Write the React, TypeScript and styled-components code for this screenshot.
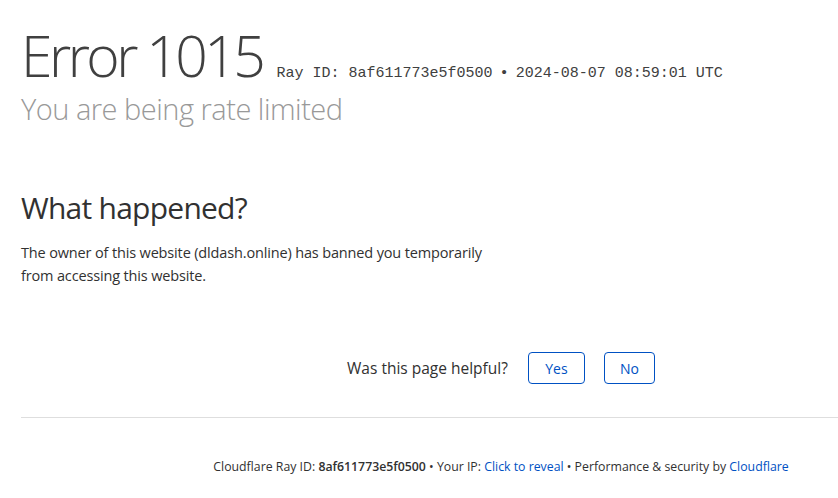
import React from "react"
import styled, { createGlobalStyle } from "styled-components"

const GlobalStyle = createGlobalStyle`
  html, body {
    margin: 0;
    padding: 0;
    background: #fff;
    overflow: hidden;
  }
  body {
    font-family: "Open Sans", "Noto Sans", sans-serif;
    color: #313131;
  }
`

const Wrapper = styled.div`
  width: 960px;
  margin-left: 21px;
  padding-top: 23px;
`

const TitleRow = styled.h1`
  display: flex;
  align-items: baseline;
  margin: 0;
  font-weight: 300;
  white-space: nowrap;
`

const Title = styled.span`
  font-size: 57px;
  line-height: 64px;
  color: #404040;
  letter-spacing: -3.5px;
`

const RayInfo = styled.small`
  font-family: "Liberation Mono", "Courier New", monospace;
  font-size: 15px;
  font-weight: 400;
  color: #404040;
  margin-left: 14px;
`

const Bullet = styled.span`
  font-family: "Liberation Sans", Arial, sans-serif;
`

const Subtitle = styled.h2`
  margin: 4px 0 0;
  font-size: 29px;
  line-height: 36px;
  font-weight: 300;
  letter-spacing: -0.5px;
  color: #999;
`

const Section = styled.section`
  margin-top: 61px;
`

const SectionTitle = styled.h2`
  margin: 0;
  font-size: 30px;
  line-height: 40px;
  font-weight: 400;
  letter-spacing: -0.75px;
  color: #313131;
`

const Paragraph = styled.p`
  margin: 14px 0 0;
  max-width: 480px;
  font-size: 14.5px;
  line-height: 22.5px;
  letter-spacing: -0.15px;
`

const Feedback = styled.div`
  display: flex;
  justify-content: center;
  align-items: center;
  gap: 19px;
  margin-top: 65px;
`

const FeedbackLabel = styled.span`
  margin-right: 1px;
  font-size: 15.5px;
  line-height: 20px;
`

const VoteButton = styled.button<{ $w: number }>`
  width: ${({ $w }) => $w}px;
  height: 32px;
  padding: 0;
  border: 1px solid #0051c3;
  border-radius: 4px;
  background: #fff;
  color: #0051c3;
  font-family: inherit;
  font-size: 14px;
  cursor: pointer;
`

const Divider = styled.hr`
  margin: 33px 0 0;
  border: 0;
  border-top: 1px solid #dedede;
`

const Footer = styled.footer`
  margin-top: 40px;
  text-align: center;
  font-size: 12.3px;
  line-height: 18px;
`

const Link = styled.a`
  color: #0051c3;
  text-decoration: none;
`

const Strong = styled.span`
  font-weight: 600;
`

export default function App() {
  return (
    <Wrapper>
      <GlobalStyle />
      <TitleRow>
        <Title>Error 1015</Title>
        <RayInfo>
          Ray ID: 8af611773e5f0500 <Bullet>•</Bullet> 2024-08-07 08:59:01 UTC
        </RayInfo>
      </TitleRow>
      <Subtitle>You are being rate limited</Subtitle>
      <Section>
        <SectionTitle>What happened?</SectionTitle>
        <Paragraph>
          The owner of this website (dldash.online) has banned you temporarily from accessing this website.
        </Paragraph>
      </Section>
      <Feedback>
        <FeedbackLabel>Was this page helpful?</FeedbackLabel>
        <VoteButton $w={57}>Yes</VoteButton>
        <VoteButton $w={51}>No</VoteButton>
      </Feedback>
      <Divider />
      <Footer>
        Cloudflare Ray ID: <Strong>8af611773e5f0500</Strong> • Your IP: <Link href="#">Click to reveal</Link> •
        Performance &amp; security by <Link href="#">Cloudflare</Link>
      </Footer>
    </Wrapper>
  )
}
